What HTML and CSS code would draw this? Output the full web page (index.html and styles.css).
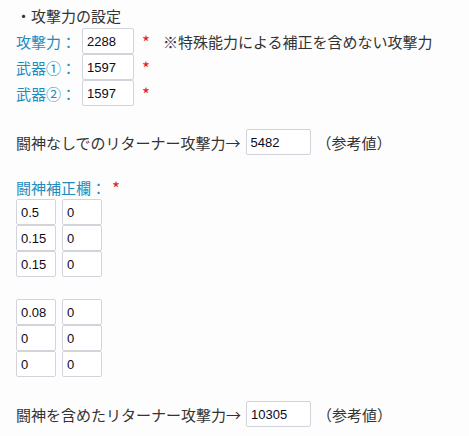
FILE: index.html
```html
<!DOCTYPE html>
<html lang="ja">
<head>
<meta charset="UTF-8">
<title>攻撃力の設定</title>
<link rel="stylesheet" href="styles.css">
</head>
<body>

<div class="section-title">・攻撃力の設定</div>

<div class="row">
    <span class="label">攻撃力：</span>
    <input type="text" class="num" value="2288">
    <span class="req">*</span>
    <span class="note">※特殊能力による補正を含めない攻撃力</span>
</div>
<div class="row">
    <span class="label">武器①：</span>
    <input type="text" class="num" value="1597">
    <span class="req">*</span>
</div>
<div class="row">
    <span class="label">武器②：</span>
    <input type="text" class="num" value="1597">
    <span class="req">*</span>
</div>

<div class="row result">
    <span>闘神なしでのリターナー攻撃力→</span>
    <input type="text" class="out" value="5482">
    <span class="ref">（参考値）</span>
</div>

<div class="row grid-title">
    <span class="label-blue">闘神補正欄：</span>
    <span class="req">*</span>
</div>

<div class="grid">
    <input type="text" class="cell" value="0.5"><input type="text" class="cell" value="0">
    <input type="text" class="cell" value="0.15"><input type="text" class="cell" value="0">
    <input type="text" class="cell" value="0.15"><input type="text" class="cell" value="0">
</div>

<div class="grid second">
    <input type="text" class="cell" value="0.08"><input type="text" class="cell" value="0">
    <input type="text" class="cell" value="0"><input type="text" class="cell" value="0">
    <input type="text" class="cell" value="0"><input type="text" class="cell" value="0">
</div>

<div class="row result last">
    <span>闘神を含めたリターナー攻撃力→</span>
    <input type="text" class="out" value="10305">
    <span class="ref">（参考値）</span>
</div>

</body>
</html>
```

FILE: styles.css
```css
body {
    font-family: "Noto Sans CJK JP", "Noto Sans", sans-serif;
    font-size: 15px;
    color: #333;
    background-color: #fdfdfd;
    margin: 0;
    padding: 4px 16px 0 16px;
}

.section-title {
    height: 24px;
    line-height: 24px;
}

.row {
    display: flex;
    align-items: center;
    height: 26px;
}

.label {
    width: 66px;
    color: #1e8cbe;
}

.label-blue {
    color: #1e8cbe;
}

input {
    box-sizing: border-box;
    height: 26px;
    margin: 0;
    padding: 0 4px;
    border: 1px solid #d3d3dc;
    border-radius: 2px;
    background-color: #fff;
    font-family: "Liberation Sans", Arial, sans-serif;
    font-size: 13px;
    color: #0a0a20;
}

.num {
    width: 52px;
}

.req {
    color: #e81c1c;
    font-size: 17px;
    margin-left: 8px;
}

.note {
    margin-left: 13px;
}

.result {
    margin-top: 23px;
}

.out {
    width: 65px;
    margin-left: 5px;
}

.ref {
    margin-left: 6px;
}

.grid-title {
    margin-top: 20px;
    height: 24px;
}

.grid-title .req {
    margin-left: 6px;
}

.grid {
    display: grid;
    grid-template-columns: 40px 40px;
    column-gap: 6px;
    width: 86px;
}

.cell {
    width: 40px;
}

.second {
    margin-top: 22px;
}

.last {
    margin-top: 24px;
}
```
